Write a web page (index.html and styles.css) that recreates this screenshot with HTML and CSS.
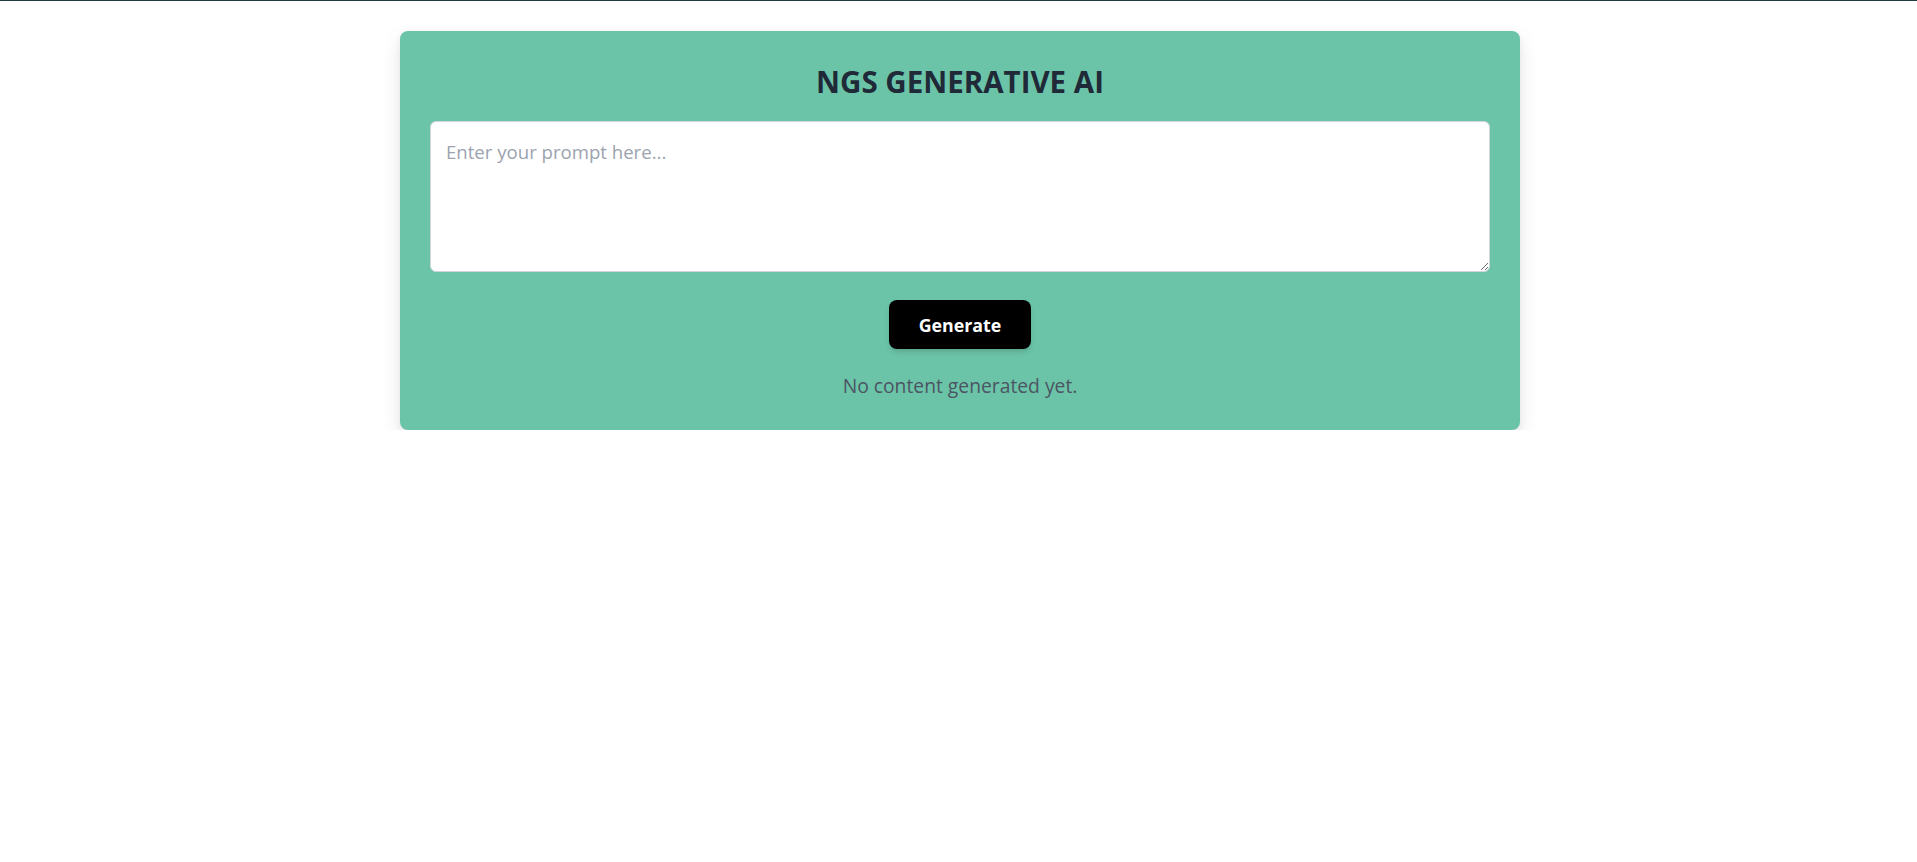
FILE: index.html
```html
<!DOCTYPE html>
<html lang="en">
<head>
<meta charset="utf-8">
<title>NGS Generative AI</title>
<link rel="stylesheet" href="styles.css">
</head>
<body>
<div class="topline"></div>
<main class="page">
  <section class="card">
    <h1 class="title">NGS GENERATIVE AI</h1>
    <textarea class="prompt" placeholder="Enter your prompt here..."></textarea>
    <div class="actions">
      <button class="generate" type="button">Generate</button>
    </div>
    <p class="status">No content generated yet.</p>
  </section>
</main>
</body>
</html>
```

FILE: styles.css
```css
* { box-sizing: border-box; }
html, body { margin: 0; padding: 0; background: #ffffff; }
body {
  font-family: "Open Sans", "Noto Sans", "Liberation Sans", sans-serif;
  color: #1f2937;
}
.topline { height: 1px; background: #1f3b40; }
.page {
  display: flex;
  justify-content: center;
  padding-top: 30px;
  padding-left: 3px;
}
.card {
  width: 1120px;
  background: #6bc4a8;
  border-radius: 8px;
  padding: 30px;
  box-shadow: 0 8px 20px rgba(0,0,0,0.10), 0 2px 6px rgba(0,0,0,0.05);
}
.title {
  margin: 0 0 18px;
  text-align: center;
  font-size: 29.5px;
  line-height: 42px;
  font-weight: 700;
  color: #1f2937;
  letter-spacing: 0;
}
.prompt {
  display: block;
  width: 100%;
  height: 151px;
  border: 1px solid #d1d5db;
  border-radius: 6px;
  background: #ffffff;
  padding: 16px 15px 14px;
  font-family: inherit;
  font-size: 18.6px;
  line-height: 28px;
  color: #111827;
  resize: vertical;
  outline: none;
}
.prompt::placeholder { color: #9ca3af; }
.actions {
  display: flex;
  justify-content: center;
  margin-top: 28px;
}
.generate {
  width: 142px;
  height: 49px;
  border: none;
  border-radius: 8px;
  background: #000000;
  color: #ffffff;
  font-family: inherit;
  font-size: 17.8px;
  font-weight: 700;
  box-shadow: 0 4px 6px -1px rgba(0,0,0,0.12), 0 2px 4px -2px rgba(0,0,0,0.1);
  cursor: pointer;
}
.status {
  margin: 23px 0 0;
  text-align: center;
  font-size: 19.3px;
  line-height: 28px;
  color: #4b5563;
}
```
